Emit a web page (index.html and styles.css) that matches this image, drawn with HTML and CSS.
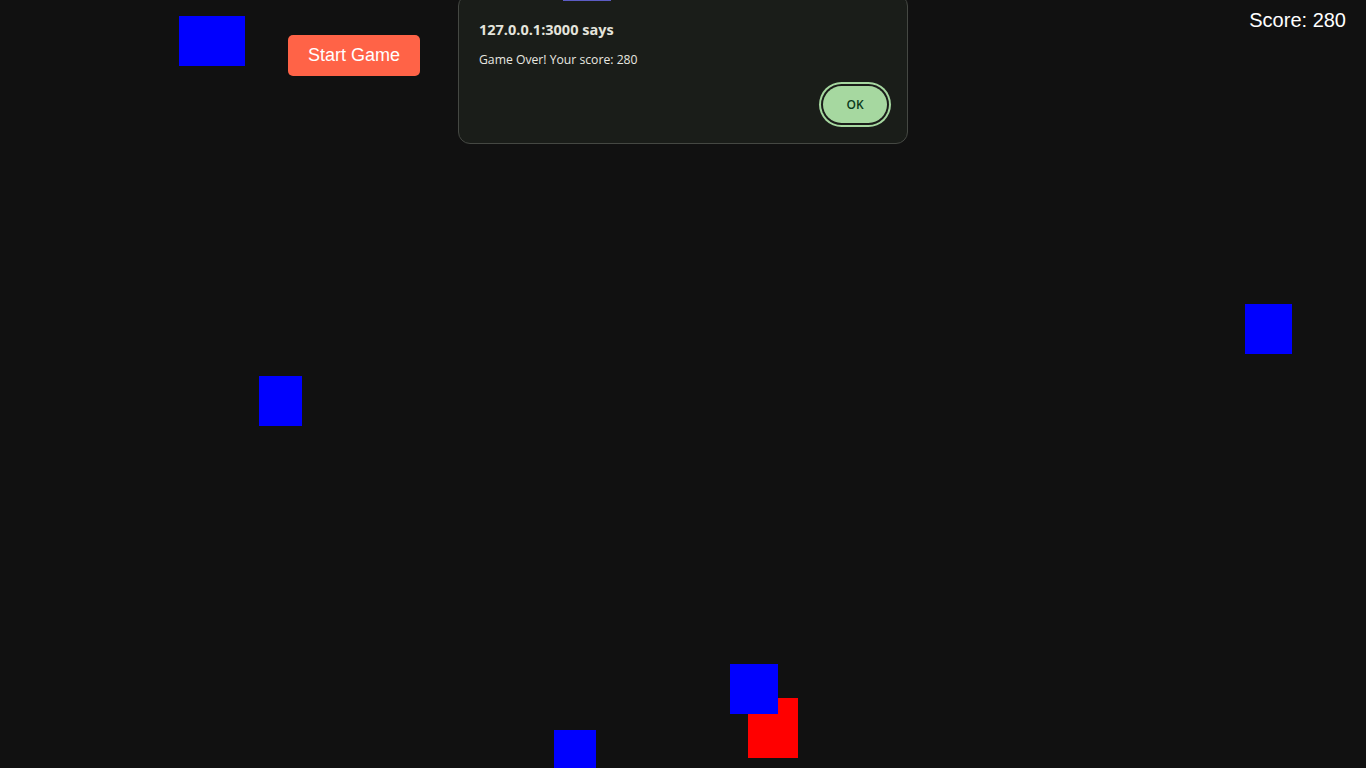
FILE: index.html
```html
<!DOCTYPE html>
<html>
<head>
<meta charset="utf-8">
<link rel="stylesheet" href="styles.css">
</head>
<body>
<div class="game">
  <div class="block blue" style="left:179px;top:16px;width:66px;height:50px"></div>
  <div class="block blue" style="left:1245px;top:304px;width:47px;height:50px"></div>
  <div class="block blue" style="left:259px;top:376px;width:43px;height:50px"></div>
  <div class="block blue" style="left:554px;top:730px;width:42px;height:50px"></div>
  <div class="block red" style="left:748px;top:698px;width:50px;height:60px"></div>
  <div class="block blue" style="left:730px;top:664px;width:48px;height:50px"></div>
  <button class="start">Start Game</button>
  <div class="score">Score: 280</div>
</div>
<div class="dialog">
  <div class="title">127.0.0.1:3000 says</div>
  <div class="message">Game Over! Your score: 280</div>
  <div class="actions"><button class="ok">OK</button></div>
</div>
<div class="peek"></div>
</body>
</html>
```

FILE: styles.css
```css
html, body {
  margin: 0;
  padding: 0;
  background: #111111;
  width: 1366px;
  height: 768px;
  overflow: hidden;
}
.game {
  position: relative;
  width: 1366px;
  height: 768px;
}
.block {
  position: absolute;
}
.blue { background: #0000ff; }
.red { background: #ff0000; }
.start {
  position: absolute;
  left: 288px;
  top: 35px;
  width: 132px;
  height: 41px;
  padding: 0;
  border: none;
  border-radius: 5px;
  background: #ff6347;
  color: #ffffff;
  font-family: "Liberation Sans", Arial, sans-serif;
  font-size: 18px;
}
.score {
  position: absolute;
  right: 20px;
  top: 9px;
  color: #ffffff;
  font-family: "Liberation Sans", Arial, sans-serif;
  font-size: 20px;
}
.dialog {
  position: absolute;
  left: 458px;
  top: -6px;
  width: 450px;
  height: 150px;
  box-sizing: border-box;
  border: 1px solid #454843;
  border-radius: 12px;
  background: #1a1d19;
  padding: 24px 16px 16px 20px;
  display: flex;
  flex-direction: column;
  font-family: "Open Sans", "Noto Sans", sans-serif;
}
.title {
  color: #e4e4dc;
  font-size: 14.5px;
  font-weight: 700;
  line-height: 22px;
}
.message {
  margin-top: 10px;
  color: #e8e8e0;
  font-size: 12.2px;
  line-height: 18px;
}
.actions {
  margin-top: auto;
  display: flex;
  justify-content: flex-end;
}
.ok {
  width: 64px;
  height: 37px;
  margin: 4px;
  border: none;
  border-radius: 19px;
  background: #a6d8a0;
  color: #0b3a1c;
  font-family: "Open Sans", "Noto Sans", sans-serif;
  font-size: 12px;
  font-weight: 600;
  box-shadow: 0 0 0 2px #1a1d19, 0 0 0 4px #a6d8a0;
}
.peek {
  position: absolute;
  left: 563px;
  top: 0;
  width: 48px;
  height: 1px;
  background: #5c5cc4;
}
```
